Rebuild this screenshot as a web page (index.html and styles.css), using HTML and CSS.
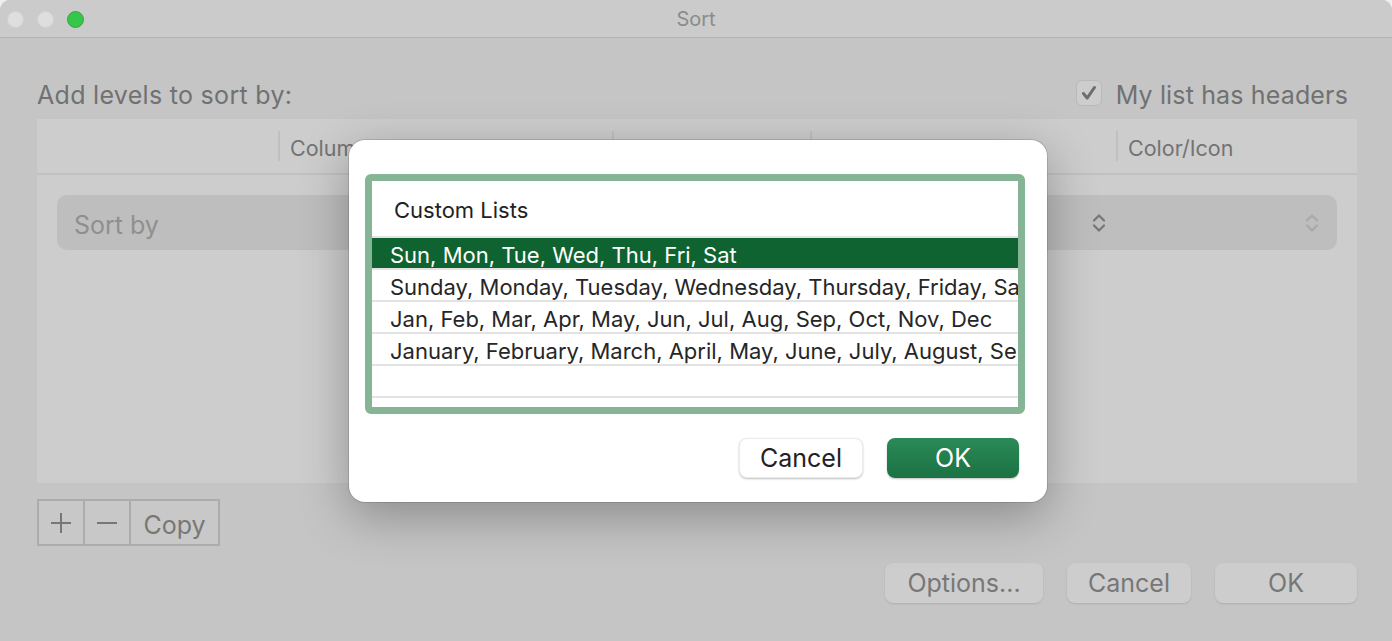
FILE: index.html
```html
<!DOCTYPE html>
<html lang="en">
<head>
  <meta charset="UTF-8">
  <meta name="viewport" content="width=device-width, initial-scale=1.0">
  <title>Sort</title>
  <link rel="stylesheet" href="styles.css">
</head>
<body>
  <div class="window">
    <header class="titlebar">
      <div class="lights">
        <span class="light"></span>
        <span class="light"></span>
        <span class="light green"></span>
      </div>
      <div class="title">Sort</div>
      <div></div>
    </header>

    <main class="content">
      <div class="top-row">
        <span class="heading">Add levels to sort by:</span>
        <label class="check">
          <span class="box">
            <svg width="26" height="26" viewBox="0 0 26 26"><path d="M7 13.5 L11 18.5 L19 7" fill="none" stroke="#6e6e6e" stroke-width="3.2" stroke-linecap="round" stroke-linejoin="round"/></svg>
          </span>
          <span class="check-text">My list has headers</span>
        </label>
      </div>

      <section class="levels">
        <div class="levels-head">
          <div class="col"></div>
          <div class="col sep">Column</div>
          <div class="col sep"></div>
          <div class="col sep"></div>
          <div class="col sep">Color/Icon</div>
        </div>
        <div class="level-row">
          <div class="popup">
            <span class="placeholder">Sort by</span>
            <svg class="chev" width="16" height="22" viewBox="0 0 16 22"><path d="M3 8.5 L8 3.5 L13 8.5 M3 13.5 L8 18.5 L13 13.5" fill="none" stroke="#767676" stroke-width="2.2" stroke-linecap="round" stroke-linejoin="round"/></svg>
            <svg class="chev last" width="16" height="22" viewBox="0 0 16 22"><path d="M3 8.5 L8 3.5 L13 8.5 M3 13.5 L8 18.5 L13 13.5" fill="none" stroke="#a9a9a9" stroke-width="2.2" stroke-linecap="round" stroke-linejoin="round"/></svg>
          </div>
        </div>
      </section>

      <div class="segmented">
        <span class="seg icon">
          <svg width="22" height="22" viewBox="0 0 22 22"><path d="M11 1 V21 M1 11 H21" stroke="#777" stroke-width="2"/></svg>
        </span>
        <span class="seg icon">
          <svg width="22" height="22" viewBox="0 0 22 22"><path d="M1 11 H21" stroke="#777" stroke-width="2"/></svg>
        </span>
        <span class="seg text">Copy</span>
      </div>

      <div class="actions">
        <button class="btn options">Options...</button>
        <button class="btn cancel">Cancel</button>
        <button class="btn ok">OK</button>
      </div>
    </main>

    <div class="sheet">
      <div class="list-frame">
        <div class="list">
          <div class="list-head">Custom Lists</div>
          <div class="list-row selected">Sun, Mon, Tue, Wed, Thu, Fri, Sat</div>
          <div class="list-row">Sunday, Monday, Tuesday, Wednesday, Thursday, Friday, Saturday</div>
          <div class="list-row">Jan, Feb, Mar, Apr, May, Jun, Jul, Aug, Sep, Oct, Nov, Dec</div>
          <div class="list-row">January, February, March, April, May, June, July, August, September, October, November, December</div>
          <div class="list-row"></div>
        </div>
      </div>
      <div class="sheet-actions">
        <button class="sheet-btn">Cancel</button>
        <button class="sheet-btn primary">OK</button>
      </div>
    </div>
  </div>
</body>
</html>
```

FILE: styles.css
```css
html {
  background-color: #efefef;
}

body {
  margin: 0;
  font-family: "Inter", "Liberation Sans", sans-serif;
}

.window {
  position: relative;
  width: 1392px;
  height: 641px;
  background-color: #c5c5c5;
  border-radius: 10px 10px 0 0;
  overflow: hidden;
}

.titlebar {
  display: grid;
  grid-template-columns: 1fr auto 1fr;
  align-items: center;
  height: 37px;
  background-color: #cbcbcb;
  border-bottom: 1px solid #b3b3b3;
}

.lights {
  display: flex;
  gap: 13px;
  padding-left: 7px;
  padding-top: 2px;
}

.light {
  width: 15px;
  height: 15px;
  border-radius: 50%;
  background-color: #dedede;
  border: 1px solid #d2d2d2;
}

.light.green {
  background-color: #35c74b;
  border-color: #2caa3f;
}

.title {
  font-size: 20px;
  color: #8b8b8b;
}

.content {
  padding: 40px 35px 0 37px;
}

.top-row {
  display: flex;
  justify-content: space-between;
  align-items: center;
  height: 30px;
  font-size: 25px;
  color: #717171;
}

.heading {
  padding-top: 4px;
  letter-spacing: 0.3px;
}

.check {
  display: flex;
  align-items: center;
  gap: 14px;
  margin-right: 9px;
}

.check-text {
  padding-top: 4px;
  letter-spacing: 0.15px;
}

.box {
  width: 26px;
  height: 26px;
  box-sizing: border-box;
  border: 1px solid #b9b9b9;
  border-radius: 6px;
  background-color: #cdcdcd;
  display: flex;
  align-items: center;
  justify-content: center;
}

.box svg {
  display: block;
}

.levels {
  margin-top: 11px;
  height: 364px;
  background-color: #cdcdcd;
}

.levels-head {
  display: grid;
  grid-template-columns: 241px 334px 198px 306px 1fr;
  height: 54px;
  border-bottom: 2px solid #c1c1c1;
  font-size: 21.5px;
  color: #737373;
}

.col {
  display: flex;
  align-items: center;
  padding-left: 10px;
  padding-top: 4px;
}

.col.sep {
  border-left: 2px solid #c0c0c0;
  margin: 12px 0 12px;
}

.level-row {
  padding: 20px 20px 0;
}

.popup {
  display: flex;
  align-items: center;
  height: 55px;
  padding: 0 17px 0 17px;
  border-radius: 10px;
  background-color: #bebebe;
}

.placeholder {
  flex: 1;
  padding-top: 4px;
  font-size: 25px;
  color: #8f8f8f;
}

.chev {
  display: block;
  margin-right: 2px;
}

.chev.last {
  margin-left: 195px;
  margin-right: 0;
}

.segmented {
  display: inline-flex;
  margin-top: 16px;
  height: 47px;
  box-sizing: border-box;
  border: 2px solid #acacac;
  background-color: #c8c8c8;
}

.seg {
  display: flex;
  align-items: center;
  justify-content: center;
  color: #777;
  font-size: 25px;
}

.seg + .seg {
  border-left: 2px solid #acacac;
}

.seg.icon {
  width: 44px;
}

.seg.text {
  width: 89px;
  padding-top: 4px;
  box-sizing: border-box;
}

.actions {
  display: flex;
  justify-content: flex-end;
  gap: 24px;
  margin-top: 17px;
}

.btn {
  height: 40px;
  border: none;
  border-radius: 8px;
  background-color: #cdcdcd;
  box-shadow: 0 1px 2px rgba(0, 0, 0, 0.12);
  font-family: inherit;
  font-size: 25px;
  color: #777;
  padding: 0;
}

.btn.options {
  width: 158px;
}

.btn.cancel {
  width: 124px;
}

.btn.ok {
  width: 142px;
}

/* custom lists sheet */
.sheet {
  position: absolute;
  left: 349px;
  top: 140px;
  width: 698px;
  height: 362px;
  box-sizing: border-box;
  padding: 34px 22px 0 16px;
  background-color: #fff;
  border-radius: 16px;
  box-shadow: 0 0 0 1px rgba(0, 0, 0, 0.12), 0 14px 50px rgba(0, 0, 0, 0.3);
}

.list-frame {
  height: 240px;
  box-sizing: border-box;
  border: 7px solid #86b596;
  border-radius: 6px;
}

.list {
  height: 100%;
  overflow: hidden;
  background-color: #fff;
}

.list-head {
  height: 51px;
  line-height: 51px;
  padding-top: 4px;
  padding-left: 22px;
  border-bottom: 2px solid #e3e3e3;
  font-size: 22px;
  color: #222;
}

.list-row {
  height: 26px;
  line-height: 26px;
  padding-top: 4px;
  padding-left: 18px;
  border-bottom: 2px solid #e3e3e3;
  font-size: 22px;
  color: #262626;
  white-space: nowrap;
  overflow: hidden;
}

.list-row.selected {
  background-color: #0e6331;
  color: #fff;
}

.sheet-actions {
  display: flex;
  justify-content: flex-end;
  gap: 24px;
  margin-top: 24px;
  padding-right: 6px;
}

.sheet-btn {
  height: 40px;
  width: 124px;
  border: 1px solid rgba(0, 0, 0, 0.08);
  border-radius: 8px;
  background-color: #fff;
  box-shadow: 0 1px 2px rgba(0, 0, 0, 0.25);
  font-family: inherit;
  font-size: 25px;
  color: #222;
  padding: 0;
}

.sheet-btn.primary {
  width: 132px;
  border: none;
  background: linear-gradient(#2b8958, #1b7244);
  color: #fff;
}
```
